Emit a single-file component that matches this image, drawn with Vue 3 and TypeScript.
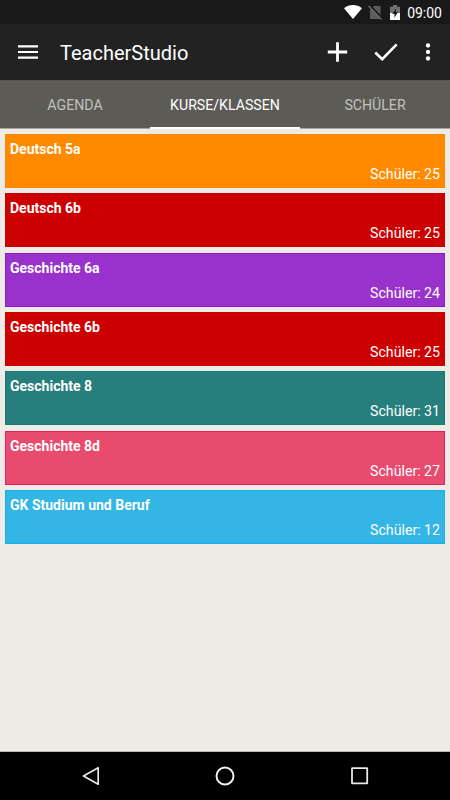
<script setup lang="ts">
import { ref } from 'vue'

interface Course {
  name: string
  students: number
  fill: string
  edge: string
}

const tabs: string[] = ['AGENDA', 'KURSE/KLASSEN', 'SCHÜLER']
const activeTab = ref(1)

const courses: Course[] = [
  { name: 'Deutsch 5a', students: 25, fill: '#ff8a00', edge: '#ff8300' },
  { name: 'Deutsch 6b', students: 25, fill: '#cc0000', edge: '#cc0000' },
  { name: 'Geschichte 6a', students: 24, fill: '#9932cc', edge: '#8f18c8' },
  { name: 'Geschichte 6b', students: 25, fill: '#cc0000', edge: '#cc0000' },
  { name: 'Geschichte 8', students: 31, fill: '#267f7c', edge: '#157b78' },
  { name: 'Geschichte 8d', students: 27, fill: '#e94b6e', edge: '#e81c5e' },
  { name: 'GK Studium und Beruf', students: 12, fill: '#33b5e6', edge: '#18aee8' },
]
</script>

<template>
  <div class="screen">
    <div class="status">
      <svg class="wifi" width="18" height="14" viewBox="0 0 18 14">
        <path d="M0 3.3C2.6 1.1 5.7 0 9 0s6.4 1.1 9 3.3L9 14z" fill="#fff" />
      </svg>
      <svg class="sim" width="15" height="15" viewBox="0 0 15 15">
        <path d="M6 1h6.500v13H2V5z" fill="#5c5c5c" />
        <path d="M1.200.200l13.500 14" stroke="#191919" stroke-width="2.600" />
        <path d="M.500 1l13 13.500" stroke="#707070" stroke-width="1.200" />
      </svg>
      <svg class="battery" width="10" height="15" viewBox="0 0 10 15">
        <path d="M0 1.800h3V0h4v1.800h3V8H0z" fill="#707070" />
        <path d="M0 8h10v7H0z" fill="#fff" />
        <path d="M6.300 3.200L2.200 9h2.300v3.800L8 7H5.700z" fill="#191919" />
      </svg>
      <span class="clock">09:00</span>
    </div>

    <header class="toolbar">
      <svg class="menu" width="20" height="14" viewBox="0 0 20 14">
        <path d="M0 1.300h20M0 7h20M0 12.700h20" stroke="#fff" stroke-width="2.200" />
      </svg>
      <h1>TeacherStudio</h1>
      <svg class="add" width="20" height="20" viewBox="0 0 20 20">
        <path d="M9.500 .300v19.400M-.200 10h19.400" stroke="#fff" stroke-width="2.800" />
      </svg>
      <svg class="check" width="24" height="18" viewBox="0 0 24 18">
        <path d="M1.300 9.500L8.200 16.200 22.700 1.300" fill="none" stroke="#fff" stroke-width="2.600" />
      </svg>
      <svg class="more" width="6" height="18" viewBox="0 0 6 18">
        <g fill="#fff">
          <circle cx="3" cy="2.500" r="2.150" />
          <circle cx="3" cy="9" r="2.150" />
          <circle cx="3" cy="15.500" r="2.150" />
        </g>
      </svg>
    </header>

    <nav class="tabs">
      <button
        v-for="(tab, i) in tabs"
        :key="tab"
        class="tab"
        :class="{ active: i === activeTab }"
        @click="activeTab = i"
      >
        {{ tab }}
      </button>
    </nav>

    <main class="list">
      <article
        v-for="course in courses"
        :key="course.name"
        class="card"
        :style="{ backgroundColor: course.fill, borderColor: course.edge }"
      >
        <strong>{{ course.name }}</strong>
        <span>Schüler: {{ course.students }}</span>
      </article>
    </main>

    <footer class="navbar">
      <svg width="22" height="22" viewBox="0 0 22 22">
        <path d="M18.200 2.800v16.400L3.500 11z" fill="none" stroke="#e8e8e8" stroke-width="1.700" stroke-linejoin="round" />
      </svg>
      <svg width="22" height="22" viewBox="0 0 22 22">
        <circle cx="11" cy="11" r="8.500" fill="none" stroke="#f2f2f2" stroke-width="1.900" />
      </svg>
      <svg width="22" height="22" viewBox="0 0 22 22">
        <rect x="3" y="3.200" width="15.200" height="15.200" rx=".4" fill="none" stroke="#e8eaea" stroke-width="1.800" />
      </svg>
    </footer>
  </div>
</template>

<style>
body {
  margin: 0;
}
</style>

<style scoped>
.screen {
  display: flex;
  flex-direction: column;
  width: 450px;
  height: 800px;
  overflow: hidden;
  background: #efece7;
  color: #fff;
  font-family: Roboto, sans-serif;
}

.status {
  display: flex;
  flex: none;
  align-items: center;
  justify-content: flex-end;
  box-sizing: border-box;
  height: 24px;
  padding-right: 8px;
  background: #191919;
}

.sim {
  margin-left: 6px;
}

.battery {
  margin: 1px 7px 0 7px;
}

.clock {
  font-size: 14px;
  line-height: 24px;
  margin-top: 2px;
}

.toolbar {
  display: flex;
  flex: none;
  align-items: center;
  box-sizing: border-box;
  height: 56px;
  padding: 0 19px 0 18px;
  background: #222;
}

.toolbar h1 {
  margin: 2px auto 0 22px;
  font-size: 20px;
  font-weight: 400;
  line-height: 28px;
}

.add {
  overflow: visible;
}

.check {
  margin: 0 27px 0 26px;
}

.tabs {
  display: flex;
  flex: none;
  box-sizing: border-box;
  height: 49px;
  border-top: 1px solid #53524e;
  border-bottom: 1px solid #aaa8a4;
  background: #5c5b56;
}

.tab {
  flex: 1;
  box-sizing: border-box;
  height: 48px;
  padding: 2px 0 0;
  border: 0;
  border-bottom: 2px solid transparent;
  background: none;
  color: #c1c0be;
  font: 14.15px/44px Roboto, sans-serif;
}

.tab.active {
  border-bottom-color: #fff;
  color: #fff;
}

.list {
  display: flex;
  flex: 1;
  flex-direction: column;
  gap: 5.360px;
  padding: 5px 5px 0;
}

.card {
  display: flex;
  flex: none;
  flex-direction: column;
  justify-content: space-between;
  box-sizing: border-box;
  height: 54px;
  padding: 5px 4px 4px;
  border: 1px solid;
  font-size: 14px;
  line-height: 18px;
}

.card strong {
  font-weight: 700;
}

.card span {
  align-self: flex-end;
  font-size: 14.150px;
}

.navbar {
  display: flex;
  flex: none;
  align-items: center;
  justify-content: center;
  gap: 112.500px;
  box-sizing: border-box;
  height: 49px;
  border-top: 1px solid #b8b6b2;
  background: #000;
}
</style>
